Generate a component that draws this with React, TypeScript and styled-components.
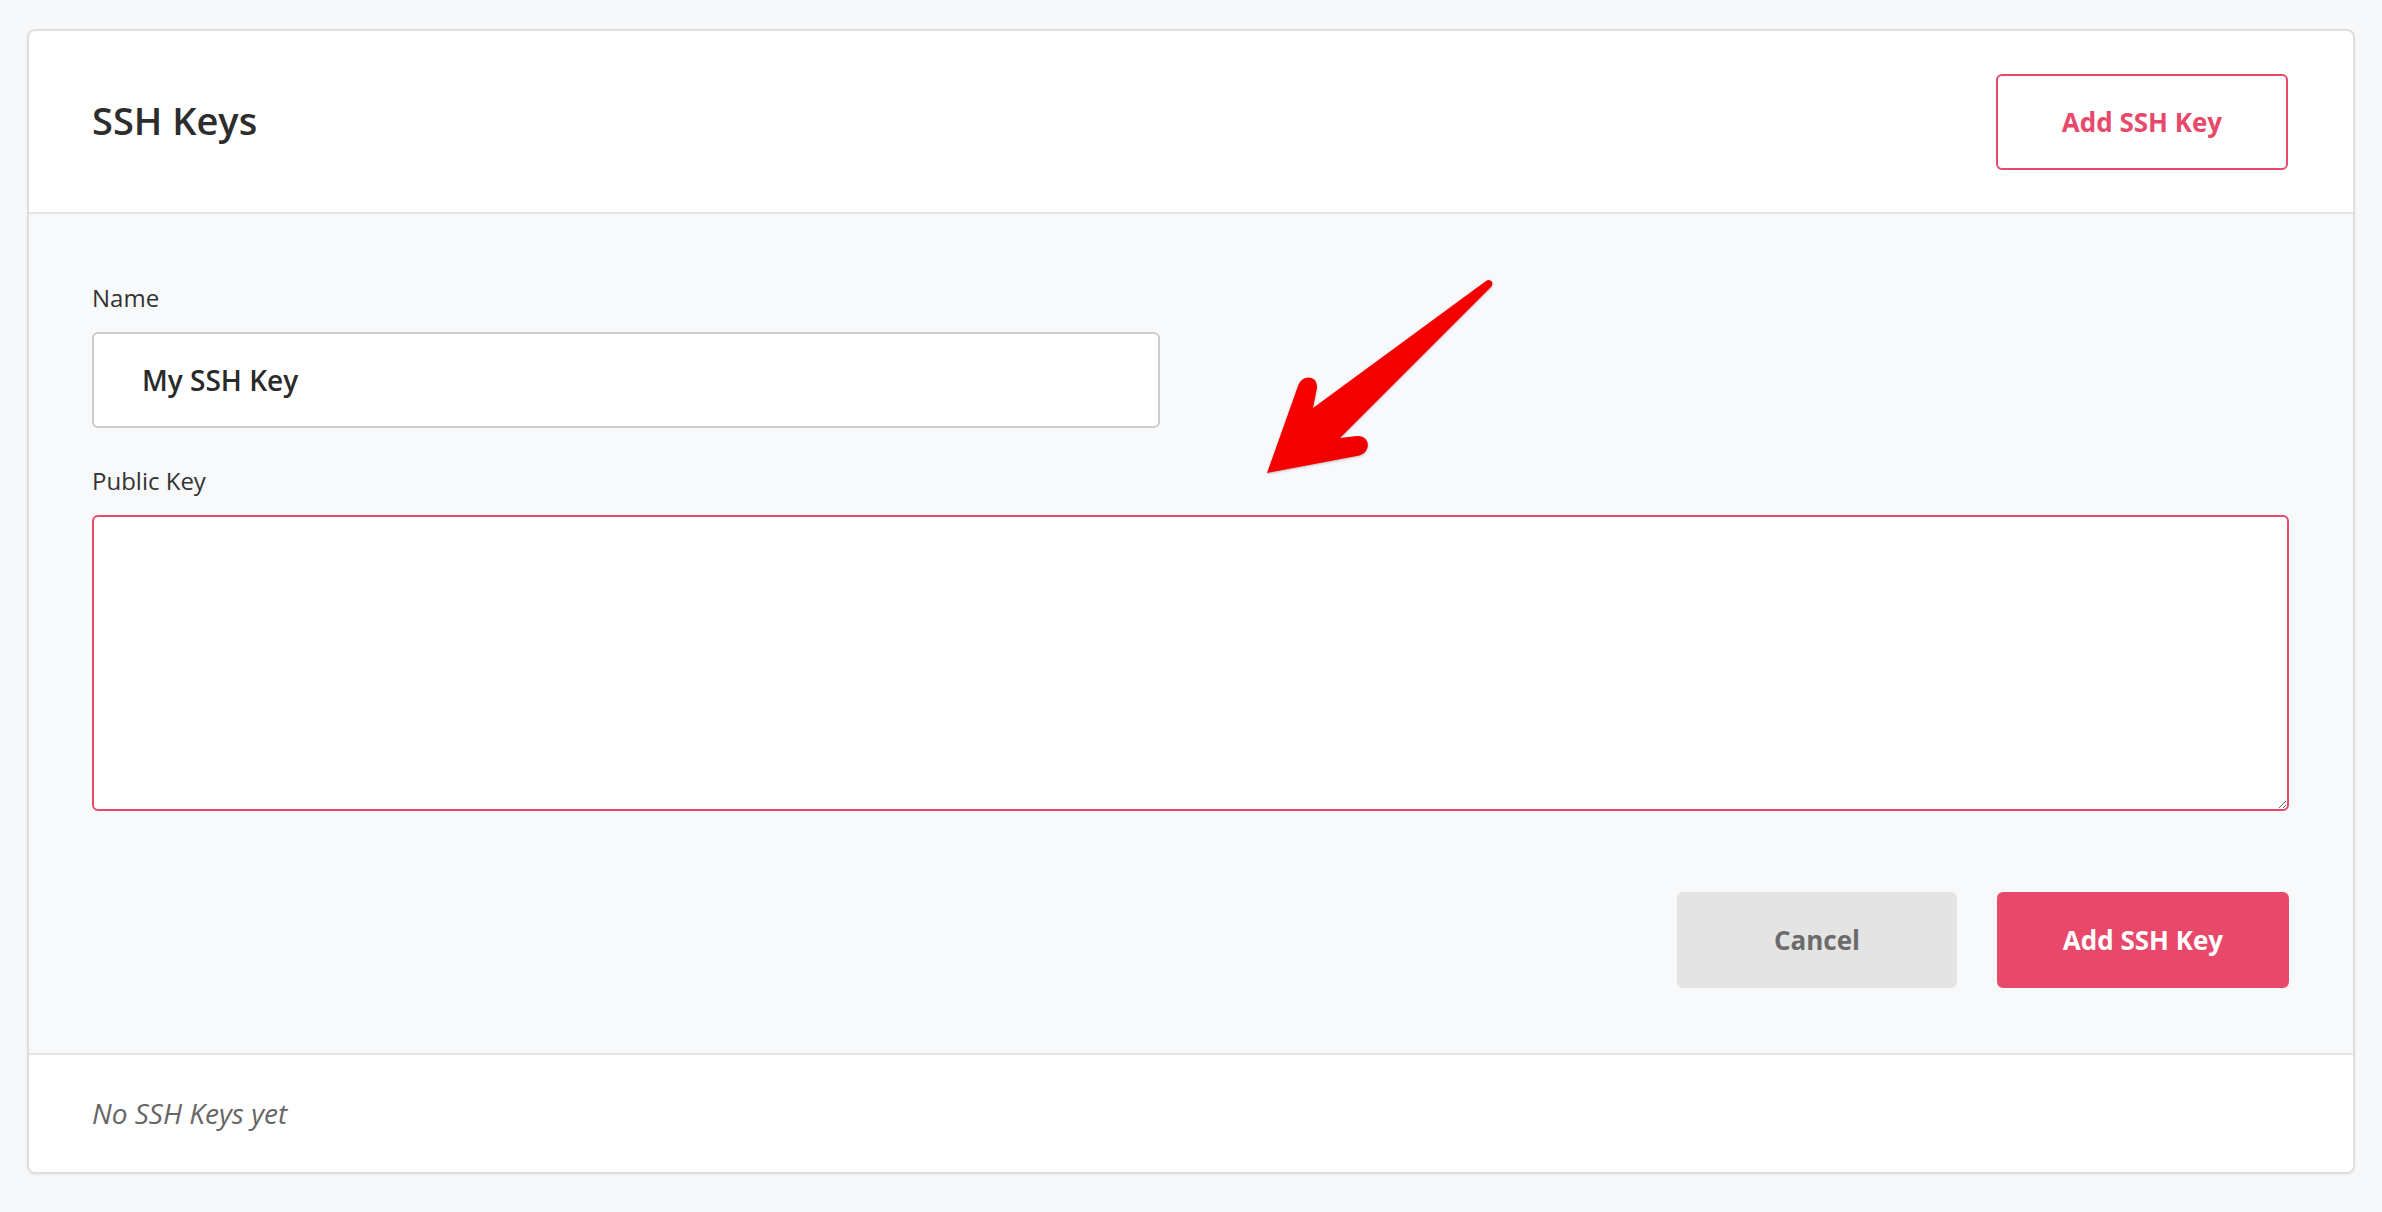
import React from "react";
import styled, { createGlobalStyle } from "styled-components";

const GlobalStyle = createGlobalStyle`
  html, body {
    margin: 0;
    padding: 0;
    background: #f7f8fa;
    font-family: "Open Sans", "Noto Sans", sans-serif;
  }
  * { box-sizing: border-box; }
`;

const Page = styled.div`
  position: relative;
  width: 2382px;
  height: 1212px;
  padding: 29px 27px 38px;
  background: #f7f8fa;
`;

const Card = styled.section`
  background: #ffffff;
  border: 2px solid #dedede;
  border-radius: 8px;
  box-shadow: 0 1px 3px rgba(0, 0, 0, 0.06);
  overflow: hidden;
`;

const Header = styled.header`
  height: 183px;
  padding: 0 65px 0 63px;
  display: flex;
  align-items: center;
  justify-content: space-between;
  border-bottom: 2px solid #e4e4e4;
`;

const Title = styled.h2`
  margin: 0 0 4px;
  font-size: 38px;
  font-weight: 600;
  color: #2d2d2d;
  letter-spacing: 0;
`;

const Button = styled.button<{ $variant: "outline" | "primary" | "muted" }>`
  height: 96px;
  min-width: ${(p) => (p.$variant === "muted" ? "280px" : "292px")};
  padding: 0 24px;
  border-radius: 6px;
  font-family: "Open Sans", "Noto Sans", sans-serif;
  font-size: 26px;
  font-weight: 700;
  cursor: pointer;
  border: 2px solid
    ${(p) =>
      p.$variant === "muted" ? "#e4e4e4" : "#e8496a"};
  background: ${(p) =>
    p.$variant === "outline"
      ? "#ffffff"
      : p.$variant === "primary"
      ? "#e8496a"
      : "#e4e4e4"};
  color: ${(p) =>
    p.$variant === "outline"
      ? "#e8496a"
      : p.$variant === "primary"
      ? "#ffffff"
      : "#6b6b6b"};
`;

const FormSection = styled.div`
  background: #f8f9fb;
  padding: 66px 64px 65px 63px;
  border-bottom: 2px solid #e4e4e4;
  display: flex;
  flex-direction: column;
`;

const Field = styled.div<{ $gap?: number }>`
  display: flex;
  flex-direction: column;
  margin-top: ${(p) => p.$gap ?? 0}px;
`;

const Label = styled.label`
  font-size: 24px;
  line-height: 36px;
  color: #333333;
  margin-bottom: 16px;
`;

const TextInput = styled.input`
  width: 1068px;
  height: 96px;
  padding: 0 20px 0 48px;
  border: 2px solid #cccccc;
  border-radius: 6px;
  background: #ffffff;
  font-family: "Open Sans", "Noto Sans", sans-serif;
  font-size: 28px;
  font-weight: 600;
  color: #2a2a2a;
  outline: none;
`;

const TextArea = styled.textarea`
  width: 100%;
  height: 296px;
  padding: 20px 24px;
  border: 2px solid #e8496a;
  border-radius: 6px;
  background: #ffffff;
  font-family: "Open Sans", "Noto Sans", sans-serif;
  font-size: 24px;
  outline: none;
  resize: vertical;
  display: block;
`;

const Actions = styled.div`
  margin-top: 81px;
  display: flex;
  justify-content: flex-end;
  gap: 40px;
`;

const Footer = styled.div`
  padding: 38px 63px;
  font-size: 28px;
  line-height: 41px;
  font-style: italic;
  color: #666666;
`;

const Annotation = styled.svg`
  position: absolute;
  left: 1250px;
  top: 270px;
  width: 260px;
  height: 220px;
  overflow: visible;
  pointer-events: none;
`;

function ArrowMark() {
  return (
    <Annotation viewBox="0 0 260 220">
      <defs>
        <linearGradient id="arrowFill" x1="0" y1="0" x2="1" y2="1">
          <stop offset="0" stopColor="#ff0a0a" />
          <stop offset="0.6" stopColor="#f20000" />
          <stop offset="1" stopColor="#d80000" />
        </linearGradient>
        <filter id="arrowShadow" x="-10%" y="-10%" width="130%" height="130%">
          <feDropShadow dx="0" dy="1" stdDeviation="1" floodColor="#000" floodOpacity="0.25" />
        </filter>
      </defs>
      <path
        d="M 17 203 L 48 116 C 52 104, 68 105, 67 118 L 63 138 L 236 11 C 240 8, 245 13, 241 17 L 90 168 L 107 166 C 121 165, 122 184, 107 186 Z"
        fill="url(#arrowFill)"
        filter="url(#arrowShadow)"
      />
    </Annotation>
  );
}

export default function App() {
  return (
    <>
      <GlobalStyle />
      <Page>
        <Card>
          <Header>
            <Title>SSH Keys</Title>
            <Button $variant="outline">Add SSH Key</Button>
          </Header>
          <FormSection>
            <Field>
              <Label htmlFor="key-name">Name</Label>
              <TextInput id="key-name" defaultValue="My SSH Key" />
            </Field>
            <Field $gap={35}>
              <Label htmlFor="key-public">Public Key</Label>
              <TextArea id="key-public" />
            </Field>
            <Actions>
              <Button $variant="muted">Cancel</Button>
              <Button $variant="primary">Add SSH Key</Button>
            </Actions>
          </FormSection>
          <Footer>No SSH Keys yet</Footer>
        </Card>
        <ArrowMark />
      </Page>
    </>
  );
}
